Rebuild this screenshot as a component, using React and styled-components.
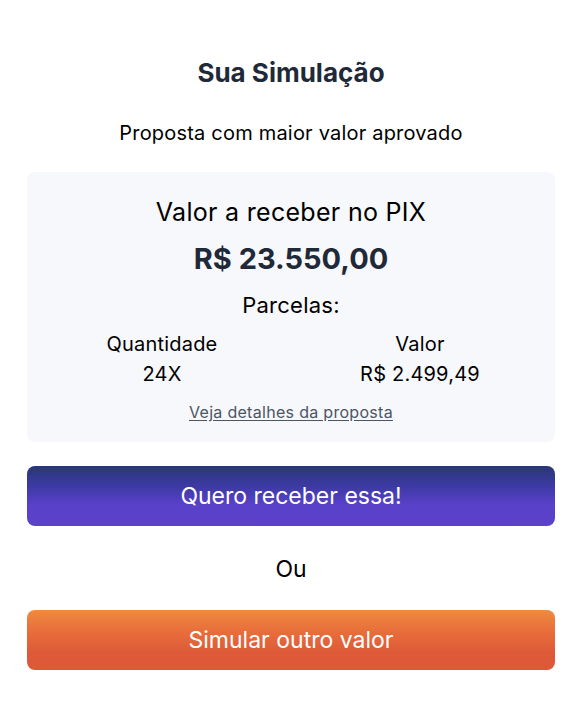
import styled, { createGlobalStyle } from "styled-components";

const GlobalStyle = createGlobalStyle`
  body {
    margin: 0;
    background: #ffffff;
    font-family: Inter, "Noto Sans", sans-serif;
    color: #000;
  }
`;

const Page = styled.main`
  padding: 57px 23px 40px 27px;
  text-align: center;
`;

const Title = styled.h1`
  margin: 0;
  font-size: 26px;
  line-height: 32px;
  font-weight: 700;
  color: #1f2937;
`;

const Subtitle = styled.p`
  margin: 30px 0 25px;
  font-size: 20px;
  line-height: 28px;
  letter-spacing: 0.2px;
`;

const Card = styled.section`
  background: #f7f8fc;
  border-radius: 8px;
  padding: 24px 0 20px;
`;

const CardTitle = styled.h2`
  margin: 0;
  font-size: 25px;
  line-height: 32px;
  font-weight: 400;
  letter-spacing: 0.3px;
`;

const Amount = styled.div`
  margin-top: 13px;
  font-size: 29px;
  line-height: 36px;
  font-weight: 700;
  color: #1f2937;
`;

const Label = styled.div`
  margin-top: 14px;
  font-size: 22px;
  line-height: 28px;
  letter-spacing: 0.25px;
`;

const Columns = styled.div`
  display: grid;
  grid-template-columns: 1fr 1fr;
  margin-top: 10px;
  padding: 0 6px;
`;

const Cell = styled.div`
  font-size: 20px;
  line-height: 30px;
  letter-spacing: 0.2px;
`;

const DetailsLink = styled.a`
  display: inline-block;
  margin-top: 13px;
  font-size: 16px;
  line-height: 20px;
  letter-spacing: 0.3px;
  color: #4b5563;
  text-decoration: underline;
  text-underline-offset: 2px;
  cursor: pointer;
`;

const Button = styled.button`
  display: block;
  width: 100%;
  height: 60px;
  border: none;
  border-radius: 8px;
  font-family: inherit;
  font-size: 23px;
  color: #ffffff;
  cursor: pointer;
  background: ${(p) =>
    p.$variant === "orange"
      ? "linear-gradient(180deg, #ef8b3e 0%, #e86e3b 35%, #de5a38 70%, #dd5838 100%)"
      : "linear-gradient(180deg, #283773 0%, #3e3aa6 35%, #5a41c9 65%, #5b41cb 100%)"};
  margin-top: ${(p) => p.$top}px;
`;

const Divider = styled.p`
  margin: 29px 0 0;
  font-size: 23px;
  line-height: 28px;
`;

const parcelas = [
  { label: "Quantidade", value: "24X" },
  { label: "Valor", value: "R$ 2.499,49" },
];

export default function App() {
  return (
    <>
      <GlobalStyle />
      <Page>
        <Title>Sua Simulação</Title>
        <Subtitle>Proposta com maior valor aprovado</Subtitle>
        <Card>
          <CardTitle>Valor a receber no PIX</CardTitle>
          <Amount>R$ 23.550,00</Amount>
          <Label>Parcelas:</Label>
          <Columns>
            {parcelas.map((p) => (
              <div key={p.label}>
                <Cell>{p.label}</Cell>
                <Cell>{p.value}</Cell>
              </div>
            ))}
          </Columns>
          <DetailsLink>Veja detalhes da proposta</DetailsLink>
        </Card>
        <Button $top={24}>Quero receber essa!</Button>
        <Divider>Ou</Divider>
        <Button $variant="orange" $top={27}>
          Simular outro valor
        </Button>
      </Page>
    </>
  );
}
